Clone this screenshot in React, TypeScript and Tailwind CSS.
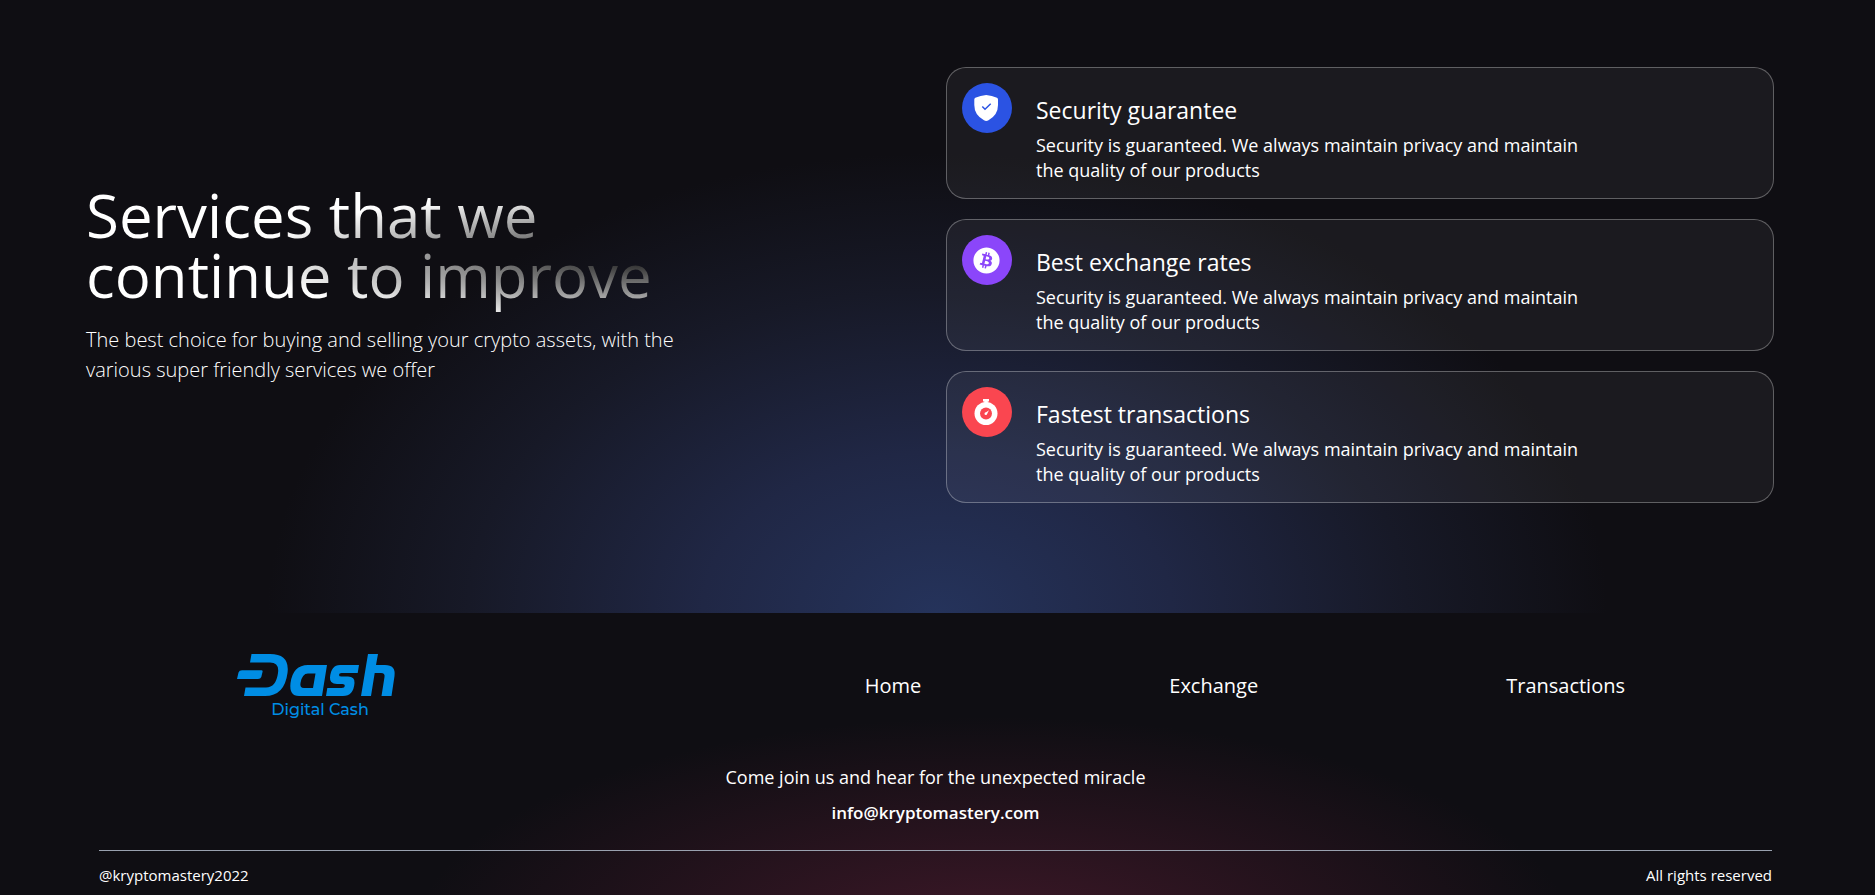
import React from "react";
import { FaBitcoin } from "react-icons/fa";

function ShieldIcon() {
  return (
    <svg viewBox="0 0 50 50" className="size-[50px] shrink-0" aria-hidden="true">
      <circle cx="25" cy="25" r="25" fill="#2b53e3" />
      <path d="M24.2 12 Q30 12.4 35 14.8 Q36 15.3 36 16.5 V22 Q36 32 26.5 37.3 Q24.2 38.6 22 37.3 Q12.3 32 12.3 22 V16.5 Q12.3 15.3 13.3 14.8 Q18.500 12.4 24.2 12Z" fill="#fff" />
      <path d="M20.300 23.500 L23 26.200 L28.700 20.800" fill="none" stroke="#2b53e3" strokeWidth="1.500" />
    </svg>
  );
}

function BitcoinIcon() {
  return (
    <span className="flex size-[50px] shrink-0 items-center justify-center rounded-full bg-[#8b46fa] pr-0.5">
      <FaBitcoin className="size-[27px] text-white" aria-hidden="true" />
    </span>
  );
}

function StopwatchIcon() {
  return (
    <svg viewBox="0 0 50 50" className="size-[50px] shrink-0" aria-hidden="true">
      <circle cx="25" cy="25" r="25" fill="#fa4650" />
      <path d="M21 12 H27 V14.500 H25.800 V17 H22.300 V14.500 H21Z" fill="#fff" />
      <circle cx="24" cy="26.500" r="11.500" fill="#fff" />
      <circle cx="24" cy="26.500" r="6" fill="#fa4650" />
      <path d="M23 26 L27 23.200 L24.800 27.500Z" fill="#fff" />
      <circle cx="23.800" cy="26.800" r="1.300" fill="#fff" />
    </svg>
  );
}

function DashLogo() {
  return (
    <svg viewBox="0 0 160 66" className="h-[66px] w-[160px]" role="img" aria-label="Dash Digital Cash">
      <g fill="#008de4">
        <path d="M15.500 1 H34 Q54 1 51.500 20 Q48.500 43 29 43 H8 L9.500 34.500 H30 Q40 34.500 42 20 Q43.500 9.500 34 9.500 H14Z" />
        <path d="M6 17.300 H25.500 Q27 17.300 26.500 19 L25.300 24 Q24.500 26 22 26 H1 L2.500 19.500 Q3.200 17.300 6 17.300Z" />
        <path fillRule="evenodd" d="M72 12 H91 L86 43 H63 Q53 43 54.500 30 Q57 12 72 12Z M72 20.500 Q66 20.500 64.500 30 Q63.500 35 68 35 H77 L79.500 20.500Z" />
        <path d="M104 12 H123 L121.700 20 H105.500 Q103 20 103 22 Q103 23.500 105.500 23.500 H112 Q119 23.500 118.500 30 Q117.500 43 107 43 H90 L91.300 35 H105.500 Q108.800 35 108.800 32.500 Q108.800 31 106.500 31 H101 Q93.500 31 94 24.500 Q95 12 104 12Z" />
        <path d="M132 1 H142 L140 12 H149 Q160 12 158.500 23 L155.500 43 H145.500 L148.500 24 Q149.200 20 145 20 H138.700 L135 43 H125Z" />
      </g>
      <text x="84" y="62" textAnchor="middle" fill="#008de4" className="font-['Montserrat','Open_Sans',sans-serif] text-base font-medium">Digital Cash</text>
    </svg>
  );
}

const services = [
  { title: "Security guarantee", icon: <ShieldIcon /> },
  { title: "Best exchange rates", icon: <BitcoinIcon /> },
  { title: "Fastest transactions", icon: <StopwatchIcon /> },
];

export default function App() {
  return (
    <div className="flex min-h-screen flex-col bg-[#0f0e13] font-['Open_Sans',sans-serif] text-white">
      <main className="grid grid-cols-2 items-start gap-8 bg-[radial-gradient(670px_460px_at_50%_100%,#25335b,#202745_35%,#171927_70%,transparent)] pt-[67px] pr-[101px] pb-[110px] pl-[86px]">
        <section className="pt-[118px]">
          <h1 className="max-w-[612px] bg-[radial-gradient(400px_66px_at_562px_73px,#1a1a1a,#fff)] bg-clip-text pb-3 text-[60px] leading-[60px] text-transparent">
            Services that we
            <br />
            continue to improve
          </h1>
          <p className="mt-2 max-w-[612px] text-xl leading-[30px] font-light">
            The best choice for buying and selling your crypto assets, with the various super friendly services we offer
          </p>
        </section>
        <section className="flex flex-col gap-5">
          {services.map((s) => (
            <article key={s.title} className="flex gap-6 rounded-[20px] border border-white/30 bg-white/5 p-[15px]">
              {s.icon}
              <div className="max-w-[560px] pt-2.5">
                <h2 className="text-[23px] leading-[34px]">{s.title}</h2>
                <p className="mt-1.5 text-lg leading-[25px]">
                  Security is guaranteed. We always maintain privacy and maintain
                  <br />
                  the quality of our products
                </p>
              </div>
            </article>
          ))}
        </section>
      </main>
      <footer className="grow bg-[radial-gradient(580px_220px_at_53%_115%,#3e1828,transparent)] pt-10 pr-[103px] pl-[99px]">
        <div className="flex items-center">
          <a href="#" className="ml-[137px]"><DashLogo /></a>
          <nav className="ml-auto flex gap-[248px] pr-[147px] text-xl">
            <a href="#">Home</a>
            <a href="#">Exchange</a>
            <a href="#">Transactions</a>
          </nav>
        </div>
        <div className="mt-[46px] pb-[25px] text-center leading-[25px]">
          <p className="text-lg leading-[25px]">Come join us and hear for the unexpected miracle</p>
          <p className="mt-2.5 text-[17px] font-semibold">info@kryptomastery.com</p>
        </div>
        <div className="flex justify-between border-t border-gray-400 pt-3 text-[15px] leading-6">
          <span>@kryptomastery2022</span>
          <span>All rights reserved</span>
        </div>
      </footer>
    </div>
  );
}
